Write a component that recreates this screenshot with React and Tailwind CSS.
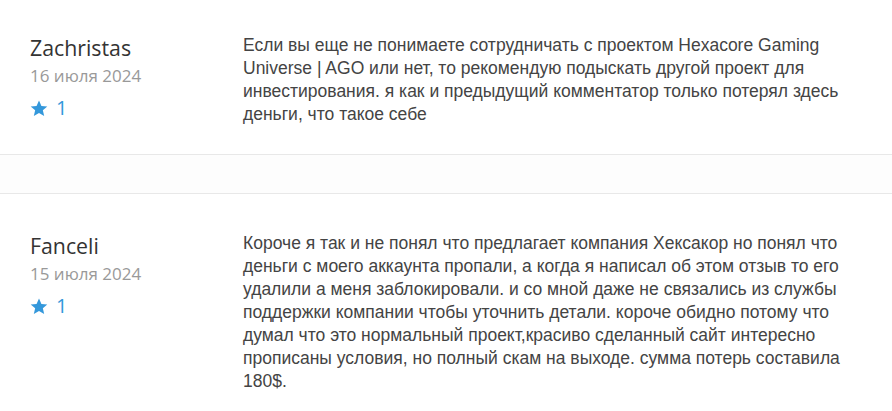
import React from "react";

const reviews = [
  {
    name: "Zachristas",
    date: "16 июля 2024",
    rating: 1,
    text: "Если вы еще не понимаете сотрудничать с проектом Hexacore Gaming Universe | AGO или нет, то рекомендую подыскать другой проект для инвестирования. я как и предыдущий комментатор только потерял здесь деньги, что такое себе",
  },
  {
    name: "Fanceli",
    date: "15 июля 2024",
    rating: 1,
    text: "Короче я так и не понял что предлагает компания Хексакор но понял что деньги с моего аккаунта пропали, а когда я написал об этом отзыв то его удалили а меня заблокировали. и со мной даже не связались из службы поддержки компании чтобы уточнить детали. короче обидно потому что думал что это нормальный проект,красиво сделанный сайт интересно прописаны условия, но полный скам на выходе. сумма потерь составила 180$.",
  },
];

function Star() {
  return (
    <svg width="18" height="17" viewBox="0 0 24 23" className="block">
      <polygon
        points="12,0.8 15.3,8 23.2,8.7 17.2,13.9 19,21.7 12,17.6 5,21.7 6.8,13.9 0.8,8.7 8.7,8"
        fill="#3498db"
      />
    </svg>
  );
}

function Review({ r, top }) {
  return (
    <div className={`flex ${top} pb-[29px]`}>
      <div className="w-[243px] shrink-0 pl-[30px] font-['Open_Sans',sans-serif]">
        <div className="text-[21.3px] leading-[28px] text-[#333]">{r.name}</div>
        <div className="text-[17px] leading-[27px] text-[#999]">{r.date}</div>
        <div className="mt-[7px] flex h-[24px] items-center gap-[8px]">
          <Star />
          <span className="text-[20px] leading-[24px] text-[#3498db]">{r.rating}</span>
        </div>
      </div>
      <p className="flex-1 pr-[37px] font-['Liberation_Sans',Arial,sans-serif] text-[17.5px] leading-[22.86px] text-[#444]">
        {r.text}
      </p>
    </div>
  );
}

export default function App() {
  return (
    <div className="min-h-[411px] w-full bg-white">
      <Review r={reviews[0]} top="pt-[34px]" />
      <div className="h-[40px] border-y border-[#e8e8e8] bg-[#fdfdfd]" />
      <Review r={reviews[1]} top="pt-[38px]" />
    </div>
  );
}
